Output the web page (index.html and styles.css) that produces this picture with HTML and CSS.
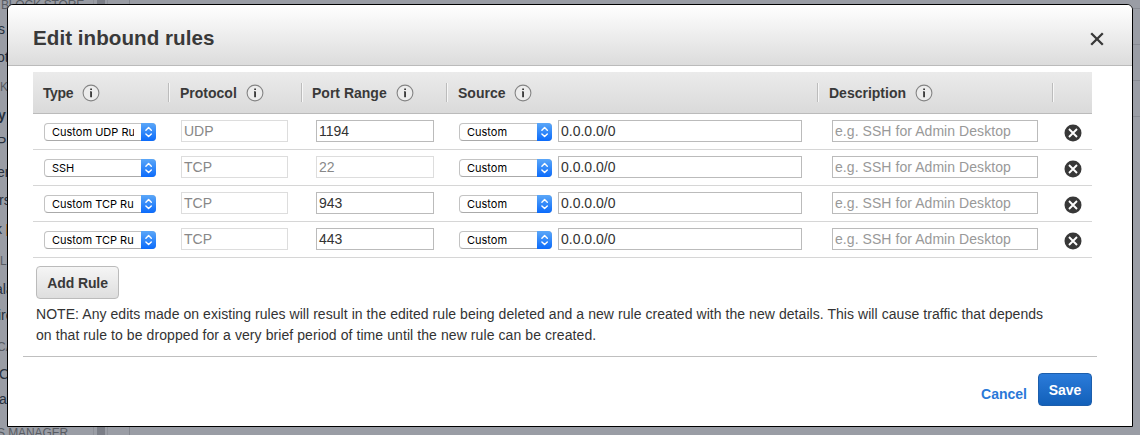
FILE: index.html
```
<!DOCTYPE html>
<html lang="en">
<head>
<meta charset="utf-8">
<title>Edit inbound rules</title>
<link rel="stylesheet" href="styles.css">
</head>
<body>
<svg class="sprite" aria-hidden="true">
  <symbol id="info" viewBox="0 0 18 18"><circle cx="9" cy="9" r="7.9" fill="#ececec" stroke="#858585" stroke-width="1.1"/><path d="M8 7.8h1v5.2" fill="none" stroke="#444" stroke-width=".8"/><path d="M9.1 7.4v5.8" stroke="#3d3d3d" stroke-width="1.8"/><path d="M8.2 4.4H10v1.7H8.2z" fill="#3d3d3d"/></symbol>
  <symbol id="remove" viewBox="0 0 18 18"><circle cx="9" cy="9" r="8.5" fill="#383838"/><path d="M5 5l8 8M13 5l-8 8" stroke="#fff" stroke-width="1.9"/></symbol>
  <symbol id="updown" viewBox="0 0 15 18"><path d="M4.9 7.3L7.6 4.6l2.7 2.7M4.9 10.9l2.7 2.7 2.7-2.7" fill="none" stroke="#fff" stroke-width="1.4" stroke-linecap="round" stroke-linejoin="round"/></symbol>
</svg>
<div class="backdrop">
  <ul class="nav">
    <li class="group block">BLOCK STORE</li>
    <li class="cut2">s</li>
    <li class="cut3">ot</li>
    <li class="group">K</li>
    <li class="strong cut2">y</li>
    <li class="cut3">P</li>
    <li class="cut3">er</li>
    <li class="cut1">rs</li>
    <li class="cut5">k<span class="flag"></span></li>
    <li class="group">L</li>
    <li class="cut5">ala</li>
    <li class="cut2">ire</li>
    <li class="group cut3">CA</li>
    <li class="cut1">C</li>
    <li class="cut1">a</li>
    <li class="group manager">S MANAGER</li>
  </ul>
  <div class="scroll"></div>
  <div class="page"><div></div><div></div><div></div><div></div></div>
</div>
<div class="modal">
  <header class="head"><h1>Edit inbound rules</h1>
    <svg class="close" viewBox="0 0 14 14"><path d="M1.2 1.2l11.6 11.6M12.8 1.2L1.2 12.8" stroke="#383838" stroke-width="2.3"/></svg>
  </header>
  <main class="body">
    <div class="table">
      <div class="cols">
        <div class="first">Type<svg class="info"><use href="#info"/></svg></div>
        <div>Protocol<svg class="info"><use href="#info"/></svg></div>
        <div class="range">Port Range<svg class="info"><use href="#info"/></svg></div>
        <div>Source<svg class="info"><use href="#info"/></svg></div>
        <div>Description<svg class="info"><use href="#info"/></svg></div>
        <div></div>
      </div>
      <div class="rule">
        <div class="select type"><span>Custom UDP Ru</span><i><svg><use href="#updown"/></svg></i></div>
        <div class="field proto off">UDP</div><div class="field port">1194</div>
        <div class="select src"><span>Custom</span><i><svg><use href="#updown"/></svg></i></div>
        <div class="field cidr">0.0.0.0/0</div><div class="field desc">e.g. SSH for Admin Desktop</div>
        <svg class="remove"><use href="#remove"/></svg>
      </div>
      <div class="rule">
        <div class="select type"><span>SSH</span><i><svg><use href="#updown"/></svg></i></div>
        <div class="field proto off">TCP</div><div class="field port off">22</div>
        <div class="select src"><span>Custom</span><i><svg><use href="#updown"/></svg></i></div>
        <div class="field cidr">0.0.0.0/0</div><div class="field desc">e.g. SSH for Admin Desktop</div>
        <svg class="remove"><use href="#remove"/></svg>
      </div>
      <div class="rule">
        <div class="select type"><span>Custom TCP Ru</span><i><svg><use href="#updown"/></svg></i></div>
        <div class="field proto off">TCP</div><div class="field port">943</div>
        <div class="select src"><span>Custom</span><i><svg><use href="#updown"/></svg></i></div>
        <div class="field cidr">0.0.0.0/0</div><div class="field desc">e.g. SSH for Admin Desktop</div>
        <svg class="remove"><use href="#remove"/></svg>
      </div>
      <div class="rule">
        <div class="select type"><span>Custom TCP Ru</span><i><svg><use href="#updown"/></svg></i></div>
        <div class="field proto off">TCP</div><div class="field port">443</div>
        <div class="select src"><span>Custom</span><i><svg><use href="#updown"/></svg></i></div>
        <div class="field cidr">0.0.0.0/0</div><div class="field desc">e.g. SSH for Admin Desktop</div>
        <svg class="remove"><use href="#remove"/></svg>
      </div>
    </div>
    <button class="add">Add Rule</button>
    <p class="note"><span class="l1">NOTE: Any edits made on existing rules will result in the edited rule being deleted and a new rule created with the new details. This will cause traffic that depends</span><br><span class="l2">on that rule to be dropped for a very brief period of time until the new rule can be created.</span></p>
  </main>
  <footer class="foot"><a class="cancel">Cancel</a><button class="save">Save</button></footer>
</div>
</body>
</html>
```
FILE: styles.css
```
* { box-sizing: border-box; }
body { margin: 0; width: 1140px; height: 435px; overflow: hidden; position: relative; background: #9a9da5; font: 14px "Liberation Sans", Arial, sans-serif; color: #333; }
.sprite { position: absolute; width: 0; height: 0; }
.backdrop { display: flex; height: 435px; overflow: hidden; }
.nav { margin: 0; padding: 0; list-style: none; width: 93px; display: grid; grid-template-rows: 17px 27px 28px 33px 23px 31px 28px 29px 29px 34px 22px 31px 32px 22px 28px 38px; margin-top: -1px; white-space: nowrap; }
.nav li { line-height: 27px; height: 27px; align-self: center; color: #26303d; }
.nav .group { color: #585c63; font-size: 12px; }
.nav .block { padding-left: 1px; line-height: 23px; letter-spacing: -.2px; }
.nav .manager { text-indent: -3px; padding-top: 1px; letter-spacing: -.1px; }
.nav .cut1 { text-indent: -1px; }
.nav .cut2 { text-indent: -2px; }
.nav .cut3 { text-indent: -3px; }
.nav .cut5 { text-indent: -5px; }
.nav .strong { font-weight: bold; }
.flag { display: inline-block; width: 5px; height: 12px; margin-left: 4px; background: #a9793f; vertical-align: -2px; }
.scroll { width: 15px; border: solid #8d9098; border-width: 0 1px; background: linear-gradient(90deg, transparent 3px, #7b7e87 3px 11px, transparent 11px); }
.page { flex: 1; margin-left: 21px; border-left: 1px solid #83868e; padding-top: 8px; display: grid; grid-template-rows: repeat(4, 36px); }
.page div { border-top: 1px solid #888b93; }
.modal { position: absolute; left: 7px; top: 4px; width: 1126px; height: 423px; background: #fff; border: 1px solid #000; border-radius: 6px 6px 0 0; overflow: hidden; }
.head { height: 61px; display: flex; align-items: center; justify-content: space-between; padding: 5px 28px 0 25px; background: linear-gradient(#fff, #dcdcdc); border-bottom: 1px solid #bbb; }
h1 { margin: 0; font-size: 20.6px; line-height: 24px; letter-spacing: .04px; color: #393939; }
.close { width: 14px; height: 14px; margin: 2px -.4px 0 0; }
.body { margin: 6px 35px 0 15px; height: 285px; padding-left: 10px; border-bottom: 1px solid #bfbfbf; }
.table { width: 1059px; }
.cols { height: 42px; display: grid; grid-template-columns: 135px 133px 145px 371px 235px 40px; align-items: center; background: linear-gradient(#ebebeb, #dadada); border-bottom: 1px solid #bbb; font-weight: bold; color: #393939; }
.cols div { height: 19px; display: flex; align-items: center; gap: 9px; padding-left: 11px; border-left: 1px solid #bcbcbc; box-shadow: inset 1px 0 #f7f7f7; }
.cols .first { padding-left: 10px; border: 0; box-shadow: none; letter-spacing: -.4px; }
.cols .range { padding-left: 10px; }
.info { width: 18px; height: 18px; }
.rule { height: 36px; border-bottom: 1px solid #d6d6d6; display: flex; align-items: flex-start; padding: 6px 0 0 11px; }
.field { height: 22px; border: 1px solid #bbb; background: #fff; padding-left: 2px; line-height: 20px; white-space: nowrap; }
.off { border-color: #ddd; color: #888; }
.proto { width: 107px; margin: 0 28px 0 25px; }
.port { width: 118px; margin-right: 25px; }
.cidr { width: 244px; margin: 0 30px 0 6px; }
.desc { width: 206px; color: #999; letter-spacing: .06px; }
.select { height: 18px; margin-top: 3px; border: 1px solid #c3c3c3; border-bottom-color: #aaa; border-radius: 4px; display: flex; background: #fff; padding-left: 7px; font: 11px/17px Inter, sans-serif; color: #000; }
.select span { flex: 1; width: 0; margin-right: 7px; overflow: hidden; white-space: nowrap; }
.select i { width: 15px; height: 18px; margin: -1px -1px 0 0; border-radius: 0 4px 4px 0; background: linear-gradient(#5ba7f8, #0b6bfb); }
.select svg { display: block; width: 15px; height: 18px; }
.type { width: 112px; }
.src { width: 93px; }
.remove { width: 18px; height: 18px; margin: 3.5px 0 0 25.5px; }
button { display: block; font: bold 14px "Liberation Sans", Arial, sans-serif; padding: 0; height: 33px; border-radius: 4px; }
.add { margin: 8px 0 0 3px; width: 83px; color: #393939; border: 1px solid #bbb; background: linear-gradient(#f5f5f5, #dedede); letter-spacing: -.1px; }
.note { margin: 5px 0 0 3px; line-height: 21px; white-space: nowrap; }
.l1 { letter-spacing: .056px; }
.l2 { letter-spacing: .083px; }
.foot { display: flex; justify-content: flex-end; padding: 16px 40px 0 0; }
.cancel { font-weight: bold; color: #2a79d8; line-height: 16px; margin: 13px 11px 0 0; }
.save { width: 54px; color: #fff; border: 1px solid #1c5eac; background: linear-gradient(#2b7bda, #1260b9); }
```
